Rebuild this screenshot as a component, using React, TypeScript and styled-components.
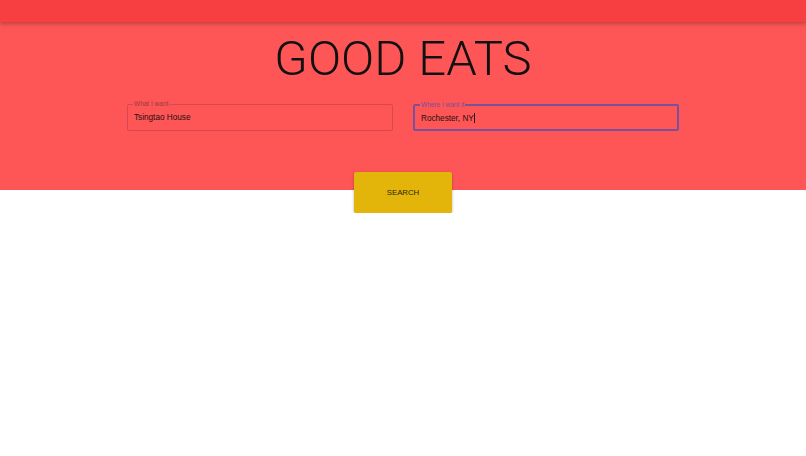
import { createGlobalStyle, styled } from "styled-components";

const GlobalStyle = createGlobalStyle`
  body {
    margin: 0;
    background: #ffffff;
    font-family: "Liberation Sans", Arial, sans-serif;
  }
`;

const TopBar = styled.header`
  height: 22px;
  background: #f73f42;
  box-shadow: 0 2px 4px rgba(0, 0, 0, 0.25);
  position: relative;
  z-index: 1;
`;

const Hero = styled.section`
  background: #fe5656;
  height: 168px;
  display: flex;
  flex-direction: column;
  align-items: center;
`;

const Title = styled.h1`
  margin: 12px 0 0;
  font-family: Roboto, "Liberation Sans", sans-serif;
  font-weight: 300;
  font-size: 49px;
  line-height: 50px;
  color: #111;
`;

const Fields = styled.div`
  display: grid;
  grid-template-columns: 266px 266px;
  gap: 20px;
  margin-top: 20px;
`;

const Field = styled.fieldset<{ $focused?: boolean }>`
  margin: 0;
  padding: 0 6px;
  height: 27px;
  box-sizing: border-box;
  border: ${(p) => (p.$focused ? "2px solid #7a4f9c" : "1px solid #d44a4e")};
  border-radius: 2px;
  position: relative;
  display: flex;
  align-items: center;
`;

const Legend = styled.legend<{ $focused?: boolean }>`
  font-size: 6.5px;
  padding: 0 1px;
  line-height: 6px;
  position: absolute;
  top: -4px;
  left: 5px;
  color: ${(p) => (p.$focused ? "#7a4f9c" : "#9b3a3c")};
  background: #fe5656;
`;

const Value = styled.span`
  font-size: 8.2px;
  color: #241010;
`;

const Caret = styled.span`
  display: inline-block;
  width: 1px;
  height: 10px;
  background: #241010;
  vertical-align: -2px;
`;

const ButtonRow = styled.div`
  display: flex;
  justify-content: center;
  margin-top: -18px;
`;

const SearchButton = styled.button`
  width: 98px;
  height: 41px;
  border: 0;
  border-radius: 2px;
  background: #e3b40a;
  color: #2a1f04;
  font-family: "Liberation Sans", Arial, sans-serif;
  font-size: 7.8px;
  box-shadow: 0 1px 3px rgba(0, 0, 0, 0.3);
  cursor: pointer;
`;

export default function App() {
  return (
    <>
      <GlobalStyle />
      <TopBar />
      <Hero>
        <Title>GOOD EATS</Title>
        <Fields>
          <Field>
            <Legend>What I want</Legend>
            <Value>Tsingtao House</Value>
          </Field>
          <Field $focused>
            <Legend $focused>Where I want it</Legend>
            <Value>
              Rochester, NY<Caret />
            </Value>
          </Field>
        </Fields>
      </Hero>
      <ButtonRow>
        <SearchButton>SEARCH</SearchButton>
      </ButtonRow>
    </>
  );
}
